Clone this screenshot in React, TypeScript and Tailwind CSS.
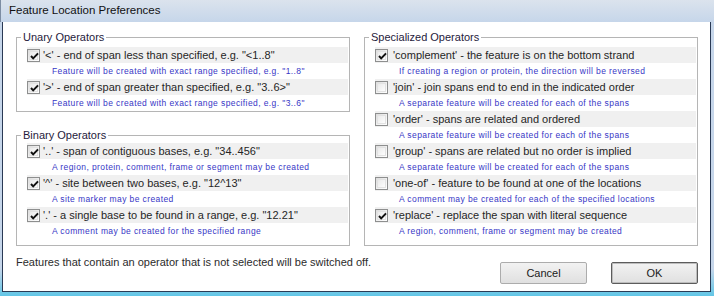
import React from 'react';

interface OptionItem {
  label: string;
  hint: string;
  checked: boolean;
}

const unaryOps: OptionItem[] = [
  { label: `'<' - end of span less than specified, e.g. "<1..8"`, hint: `Feature will be created with exact range specified, e.g. "1..8"`, checked: true },
  { label: `'>' - end of span greater than specified, e.g. "3..6>"`, hint: `Feature will be created with exact range specified, e.g. "3..6"`, checked: true },
];

const binaryOps: OptionItem[] = [
  { label: `'..' - span of contiguous bases, e.g. "34..456"`, hint: 'A region, protein, comment, frame or segment may be created', checked: true },
  { label: `'^' - site between two bases, e.g. "12^13"`, hint: 'A site marker may be created', checked: true },
  { label: `'.' - a single base to be found in a range, e.g. "12.21"`, hint: 'A comment may be created for the specified range', checked: true },
];

const specialOps: OptionItem[] = [
  { label: `'complement' - the feature is on the bottom strand`, hint: 'If creating a region or protein, the direction will be reversed', checked: true },
  { label: `'join' - join spans end to end in the indicated order`, hint: 'A separate feature will be created for each of the spans', checked: false },
  { label: `'order' - spans are related and ordered`, hint: 'A separate feature will be created for each of the spans', checked: false },
  { label: `'group' - spans are related but no order is implied`, hint: 'A separate feature will be created for each of the spans', checked: false },
  { label: `'one-of' - feature to be found at one of the locations`, hint: 'A comment may be created for each of the specified locations', checked: false },
  { label: `'replace' - replace the span with literal sequence`, hint: 'A region, comment, frame or segment may be created', checked: true },
];

const CheckBox: React.FC<{ checked: boolean }> = ({ checked }) => (
  <div className="w-[13px] h-[13px] shrink-0 border border-[#8e8f8f] bg-[linear-gradient(135deg,#dcdcdc,#f7f7f7_70%,#ffffff)] p-[1px]">
    <div className="w-full h-full border border-[#e2e2e2] bg-[linear-gradient(135deg,#eaeaea,#fdfdfd)]">
      {checked && (
        <svg width="9" height="9" viewBox="0 0 9 9" className="block">
          <polyline points="1,4 3.2,6.4 8,1.4" fill="none" stroke="#111" strokeWidth="2" />
        </svg>
      )}
    </div>
  </div>
);

const OptionGroup: React.FC<{
  title: string;
  items: OptionItem[];
  textGap: string;
  hintPad: string;
  className?: string;
}> = ({ title, items, textGap, hintPad, className }) => (
  <fieldset className={`border border-[#b5b5b5] pl-[10px] pr-[1px] ${className ?? ''}`}>
    <legend className="ml-[-6px] px-[2px] text-[11px] leading-[14px] text-[#1f1a3c]">{title}</legend>
    {items.map((item, index) => (
      <div key={index}>
        <div className="h-4 bg-[#f0f0f0] flex items-center">
          <CheckBox checked={item.checked} />
          <span className={`${textGap} text-[11px] text-[#262626] whitespace-nowrap`}>{item.label}</span>
        </div>
        <div className={`h-4 ${hintPad} text-[8.5px] tracking-[0.4px] leading-[14px] pt-[1px] text-[#3737c6] whitespace-nowrap`}>
          {item.hint}
        </div>
      </div>
    ))}
  </fieldset>
);

export default function App() {
  return (
    <div className="w-[714px] h-[296px] flex flex-col bg-[#c3d6ec] font-['Liberation_Sans',Arial,sans-serif] overflow-hidden">
      <div className="h-[22px] shrink-0 flex items-center pl-2 border-l border-[#7d8da3] bg-[linear-gradient(#dbe3ed,#c6d6ea)]">
        <span className="text-[11.5px] text-[#111]">Feature Location Preferences</span>
      </div>
      <div className="flex-1 flex flex-col pl-[2px] pr-[3px] pb-[4px] bg-[linear-gradient(#c6d6ea,#c6d6ea_90%,#62c6e6)]">
        <div className="flex-1 flex flex-col bg-white border-x border-b border-[#2a3a55]">
          <div className="flex gap-[14px] pl-[13px] pt-2">
            <div className="w-[334px] flex flex-col">
              <OptionGroup title="Unary Operators" items={unaryOps} textGap="ml-[3px]" hintPad="pl-[25px]" className="pt-[3px]" />
              <OptionGroup title="Binary Operators" items={binaryOps} textGap="ml-[3px]" hintPad="pl-[25px]" className="mt-4 pt-[1px] pb-[6px]" />
            </div>
            <div className="w-[334px] flex flex-col">
              <OptionGroup title="Specialized Operators" items={specialOps} textGap="ml-[5px]" hintPad="pl-[24px]" className="pt-[3px] pb-[6px]" />
            </div>
          </div>
          <div className="flex justify-between pl-[13px] pr-[12px]">
            <p className="pt-[9px] text-[11px] leading-[14px] text-[#2b2b2b]">
              Features that contain an operator that is not selected will be switched off.
            </p>
            <div className="flex gap-[24px] mt-4">
              <button className="w-[87px] h-[22px] rounded-[2px] border border-[#acacac] bg-[linear-gradient(#f2f2f2,#e9e9e9_50%,#e0e0e0)] text-[11px] text-[#1a1a1a]">
                Cancel
              </button>
              <button className="w-[87px] h-[22px] rounded-[2px] border border-[#5c5c5c] shadow-[inset_0_0_0_1px_#bdbdbd] bg-[linear-gradient(#f2f2f2,#e9e9e9_50%,#e0e0e0)] text-[11px] text-[#1a1a1a]">
                OK
              </button>
            </div>
          </div>
        </div>
      </div>
    </div>
  );
}
